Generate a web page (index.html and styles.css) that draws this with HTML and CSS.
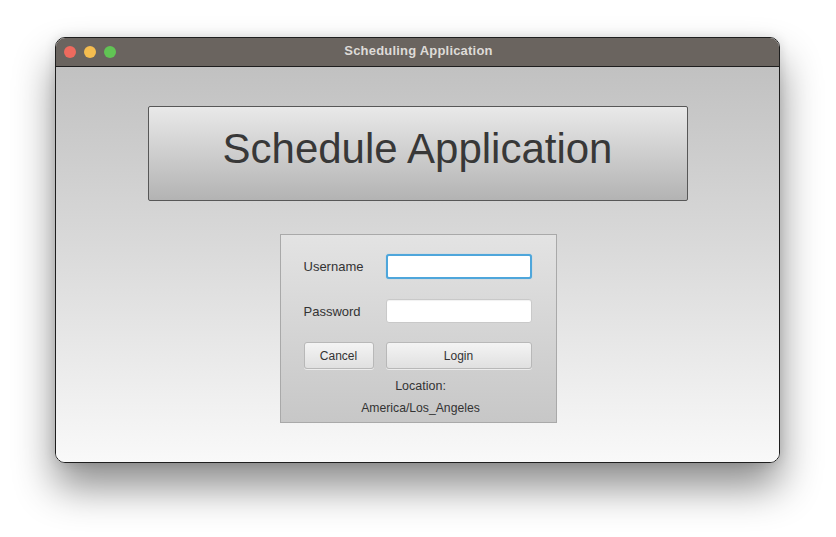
FILE: index.html
```html
<!DOCTYPE html>
<html>
<head>
<meta charset="utf-8">
<link rel="stylesheet" href="styles.css">
</head>
<body>
<div class="desk">
  <div class="window">
    <div class="titlebar">
      <div class="lights">
        <span class="light red"></span>
        <span class="light yellow"></span>
        <span class="light green"></span>
      </div>
      <div class="wtitle">Scheduling Application</div>
    </div>
    <div class="content">
      <div class="banner">Schedule Application</div>
      <div class="panel">
        <div class="form">
          <label class="lbl">Username</label>
          <div class="field focused"></div>
          <label class="lbl">Password</label>
          <div class="field"></div>
          <button class="btn">Cancel</button>
          <button class="btn">Login</button>
        </div>
        <div class="loc">Location:</div>
        <div class="loc zone">America/Los_Angeles</div>
      </div>
    </div>
  </div>
</div>
</body>
</html>
```
FILE: styles.css
```css
html, body {
  margin: 0;
  padding: 0;
  background: #ffffff;
  width: 836px;
  height: 537px;
  overflow: hidden;
}
.desk {
  padding: 37px 0 0 55px;
}
.window {
  width: 723px;
  height: 424px;
  border: 1px solid #1e1e1e;
  border-radius: 10px;
  overflow: hidden;
  display: flex;
  flex-direction: column;
  box-shadow: 0 24px 40px rgba(0,0,0,0.45), 0 0 12px rgba(0,0,0,0.12);
  font-family: "Liberation Sans", Arial, sans-serif;
}
.titlebar {
  height: 28px;
  background: #6a645f;
  border-bottom: 1px solid #1e1e1e;
  position: relative;
  display: flex;
  align-items: center;
  justify-content: center;
  flex: none;
}
.lights {
  position: absolute;
  left: 8px;
  top: 8px;
  display: flex;
  gap: 8px;
}
.light {
  width: 12px;
  height: 12px;
  border-radius: 50%;
  display: block;
}
.red { background: #ee6a5e; }
.yellow { background: #f5bd4f; }
.green { background: #61c454; }
.wtitle {
  color: #dedbd8;
  font-weight: bold;
  font-size: 13px;
  letter-spacing: 0.2px;
  margin-left: 2px;
  margin-bottom: 3px;
}
.content {
  flex: 1;
  background: linear-gradient(to bottom, #c1c1c1 0%, #dcdcdc 50%, #f9f9f9 100%);
  display: flex;
  flex-direction: column;
  align-items: center;
  padding-top: 39px;
}
.banner {
  width: 538px;
  height: 93px;
  border: 1px solid #575757;
  border-radius: 2px;
  background: linear-gradient(to bottom, #e9e9e9, #b3b3b3);
  color: #383838;
  font-size: 42px;
  line-height: 84px;
  text-align: center;
  box-sizing: content-box;
}
.panel {
  margin-top: 33px;
  margin-left: 2px;
  width: 275px;
  height: 187px;
  border: 1px solid #a9a9a9;
  background: linear-gradient(to bottom, #e3e3e3, #c7c7c7);
  box-sizing: content-box;
  display: flex;
  flex-direction: column;
  align-items: center;
}
.form {
  margin-top: 19px;
  margin-right: 2px;
  display: grid;
  grid-template-columns: 70px 146px;
  grid-template-rows: 25px 24px 27px;
  column-gap: 12px;
  row-gap: 20px;
  align-items: center;
}
.form .btn { margin-top: -2px; }
.lbl {
  font-size: 13px;
  color: #333;
}
.field {
  height: 22px;
  background: #ffffff;
  border: 1px solid #c9c9c9;
  border-radius: 3px;
  box-shadow: inset 0 1px 1px rgba(0,0,0,0.06);
}
.field.focused {
  height: 21px;
  border: 2px solid #4ea6db;
  box-shadow: 0 0 1px #7fc0e8;
}
.btn {
  height: 27px;
  font-family: "Liberation Sans", Arial, sans-serif;
  font-size: 12px;
  color: #333;
  background: linear-gradient(to bottom, #f4f4f4, #e0e0e0);
  border: 1px solid #b8b8b8;
  border-radius: 3px;
  padding: 0;
  box-shadow: 0 1px 0 rgba(255,255,255,0.6);
}
.loc {
  font-size: 12.5px;
  color: #333;
  margin-top: 9px;
  text-align: center;
  margin-left: 4px;
}
.zone {
  font-size: 12.2px;
  margin-top: 8px;
}
```
